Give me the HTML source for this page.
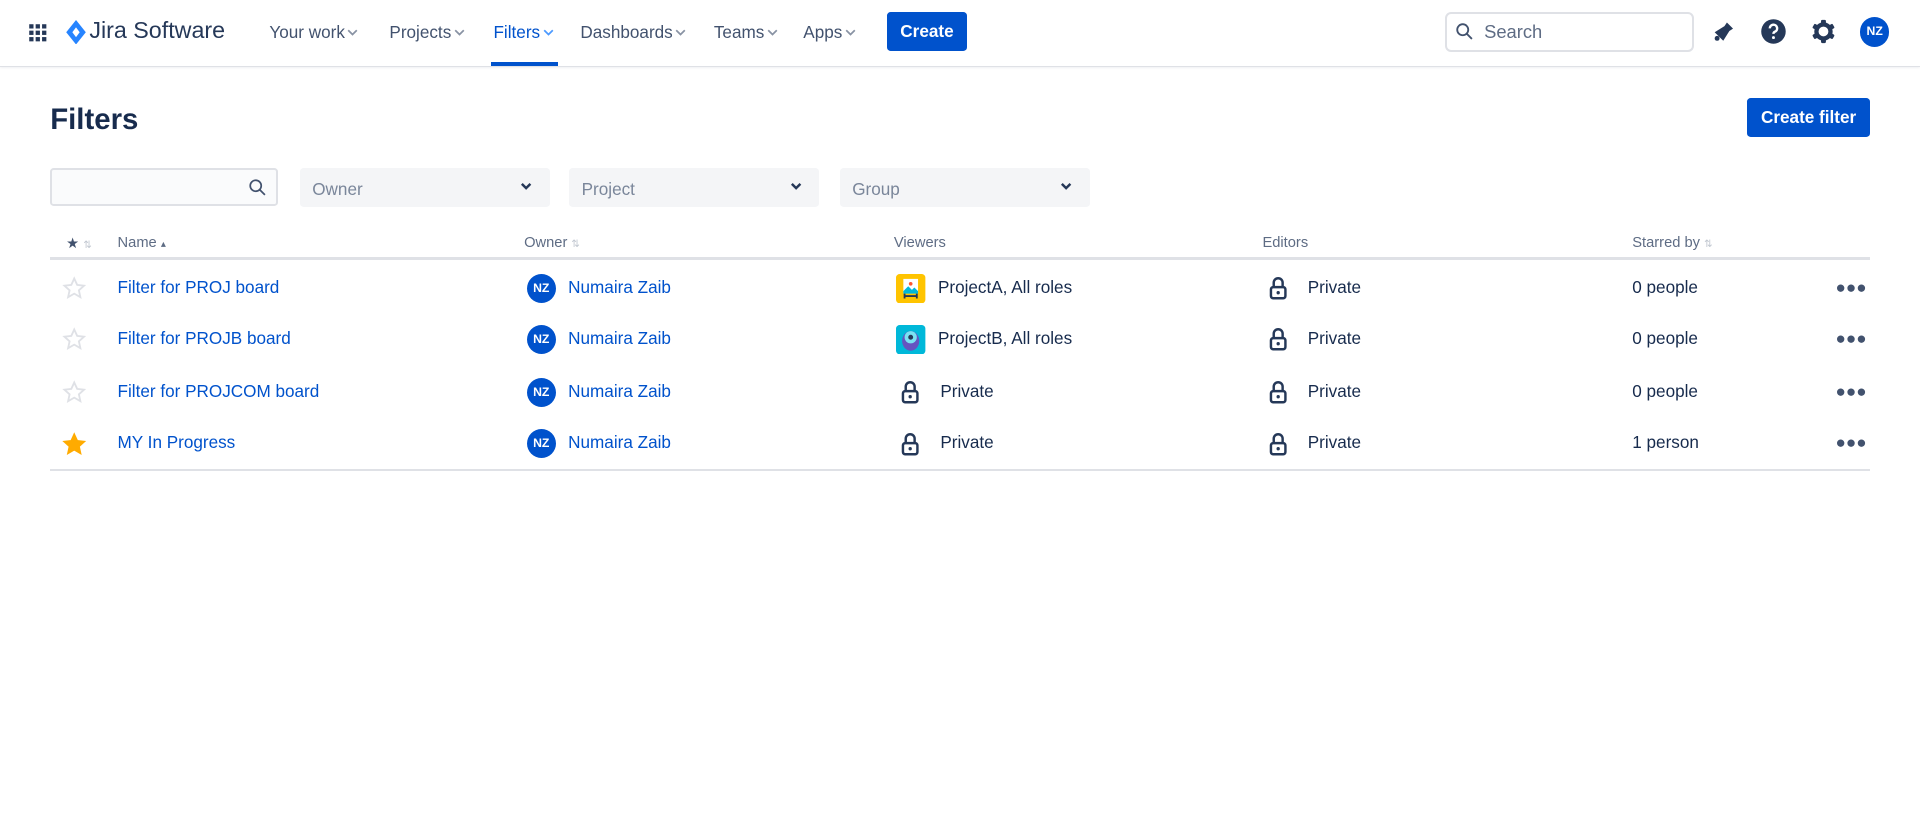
<!DOCTYPE html>
<html><head><meta charset="utf-8"><style>
html{zoom:1.2245}
body{margin:0;width:1568px;height:684px;overflow:hidden;background:#fff;font-family:"Liberation Sans",sans-serif;color:#172b4d;font-size:14px;position:relative}
.a{position:absolute}
.nav{left:0;top:0;width:1568px;height:54px;border-bottom:1px solid #dfe1e6;box-shadow:0 1px 2px rgba(9,30,66,.08)}
.ni{top:18px;font-size:14px;color:#42526e;white-space:nowrap}
.ni svg{margin-left:2px;vertical-align:1px}
.btn{background:#0052cc;color:#fff;font-weight:bold;border-radius:3px;text-align:center}
.sel{background:#f4f5f7;border-radius:3px;height:32px;top:137px;color:#7a869a;font-size:14px}
.sel span{position:absolute;left:10px;top:9px}
.sel svg{position:absolute;right:14px;top:12px}
.th{top:192px;font-size:12px;color:#5e6c84}
.row{left:41px;width:1486px;height:43px}
.cell{position:absolute;top:0;height:43px;line-height:43px;white-space:nowrap}
.av{display:inline-block;width:24px;height:24px;border-radius:50%;background:#0052cc;color:#fff;font-size:10px;line-height:24px;text-align:center;vertical-align:middle;margin-right:10px;font-weight:bold}
.lk{vertical-align:middle;margin-right:10px}
.dots{left:1458px;font-size:14px;letter-spacing:0px;color:#42526e}
a{color:#0052cc;text-decoration:none}
</style></head><body>
<div class="a nav"></div>
<svg class="a" style="left:23px;top:19px" width="16" height="16" viewBox="0 0 16 16" fill="#253858"><rect x="1" y="1" width="3.5" height="3.5"/><rect x="6.25" y="1" width="3.5" height="3.5"/><rect x="11.5" y="1" width="3.5" height="3.5"/><rect x="1" y="6.25" width="3.5" height="3.5"/><rect x="6.25" y="6.25" width="3.5" height="3.5"/><rect x="11.5" y="6.25" width="3.5" height="3.5"/><rect x="1" y="11.5" width="3.5" height="3.5"/><rect x="6.25" y="11.5" width="3.5" height="3.5"/><rect x="11.5" y="11.5" width="3.5" height="3.5"/></svg>
<svg class="a" style="left:53px;top:16px" width="18" height="20" viewBox="0 0 18 20"><path d="M9 0 L17 10 L9 20 L1 10Z" fill="#2684ff"/><path d="M9 6 L12 10 L9 14 L6 10Z" fill="#fff"/></svg>
<div class="a" style="left:73px;top:14px;font-size:19px;color:#253858">Jira Software</div>
<div class="a ni" style="left:220px">Your work<svg width="9" height="6" viewBox="0 0 9 6"><path d="M1 1l3.5 3.5L8 1" stroke="#8993a4" stroke-width="1.4" fill="none"/></svg></div>
<div class="a ni" style="left:318px">Projects<svg width="9" height="6" viewBox="0 0 9 6"><path d="M1 1l3.5 3.5L8 1" stroke="#8993a4" stroke-width="1.4" fill="none"/></svg></div>
<div class="a ni" style="left:403px;color:#0052cc">Filters<svg width="9" height="6" viewBox="0 0 9 6"><path d="M1 1l3.5 3.5L8 1" stroke="#4c9aff" stroke-width="1.4" fill="none"/></svg></div>
<div class="a" style="left:401px;top:51px;width:55px;height:3px;background:#0052cc"></div>
<div class="a ni" style="left:474px">Dashboards<svg width="9" height="6" viewBox="0 0 9 6"><path d="M1 1l3.5 3.5L8 1" stroke="#8993a4" stroke-width="1.4" fill="none"/></svg></div>
<div class="a ni" style="left:583px">Teams<svg width="9" height="6" viewBox="0 0 9 6"><path d="M1 1l3.5 3.5L8 1" stroke="#8993a4" stroke-width="1.4" fill="none"/></svg></div>
<div class="a ni" style="left:656px">Apps<svg width="9" height="6" viewBox="0 0 9 6"><path d="M1 1l3.5 3.5L8 1" stroke="#8993a4" stroke-width="1.4" fill="none"/></svg></div>
<div class="a btn" style="left:724px;top:10px;width:66px;height:32px;line-height:32px">Create</div>
<div class="a" style="left:1180px;top:10px;width:200px;height:29px;border:2px solid #dfe1e6;border-radius:5px"></div>
<svg class="a" style="left:1189px;top:19px" width="14" height="14" viewBox="0 0 14 14"><circle cx="5.5" cy="5.5" r="4.5" stroke="#42526e" stroke-width="1.5" fill="none"/><path d="M9 9l4 4" stroke="#42526e" stroke-width="1.5"/></svg>
<div class="a" style="left:1212px;top:17px;font-size:15px;color:#5e6c84">Search</div>
<svg class="a" style="left:1397px;top:16px" width="20" height="20" viewBox="0 0 20 20"><path d="M13 2 L18 7 L15 9 L10 17 L3 10 L11 5Z" fill="#253858"/><circle cx="5" cy="15" r="2" fill="#253858"/></svg>
<svg class="a" style="left:1437px;top:15px" width="22" height="22" viewBox="0 0 22 22"><circle cx="11" cy="11" r="10" fill="#253858"/><path d="M8 8.5a3 3 0 1 1 4 2.8c-.8.4-1 .9-1 1.7" stroke="#fff" stroke-width="2" fill="none"/><circle cx="11" cy="16" r="1.2" fill="#fff"/></svg>
<svg class="a" style="left:1478px;top:15px" width="22" height="22" viewBox="0 0 22 22"><g fill="#253858"><circle cx="11" cy="11" r="7.5"/><rect x="9" y="1.5" width="4" height="19" rx="1"/><rect x="9" y="1.5" width="4" height="19" rx="1" transform="rotate(60 11 11)"/><rect x="9" y="1.5" width="4" height="19" rx="1" transform="rotate(120 11 11)"/></g><circle cx="11" cy="11" r="4" fill="#fff"/></svg>
<div class="a av" style="left:1519px;top:14px;margin:0">NZ</div>
<div class="a" style="left:41px;top:84px;font-size:24px;font-weight:bold;color:#172b4d">Filters</div>
<div class="a btn" style="left:1427px;top:80px;width:100px;height:32px;line-height:32px">Create filter</div>
<div class="a" style="left:41px;top:137px;width:183px;height:28px;border:2px solid #dfe1e6;background:#fafbfc;border-radius:3px"></div>
<svg class="a" style="left:203px;top:146px" width="14" height="14" viewBox="0 0 14 14"><circle cx="5.5" cy="5.5" r="4.5" stroke="#42526e" stroke-width="1.4" fill="none"/><path d="M9 9l4 4" stroke="#42526e" stroke-width="1.4"/></svg>
<div class="a sel" style="left:245px;width:204px"><span>Owner</span><svg width="10" height="7" viewBox="0 0 10 7"><path d="M1.5 1.5l3.5 3.5 3.5-3.5" stroke="#253858" stroke-width="2" fill="none"/></svg></div>
<div class="a sel" style="left:465px;width:204px"><span>Project</span><svg width="10" height="7" viewBox="0 0 10 7"><path d="M1.5 1.5l3.5 3.5 3.5-3.5" stroke="#253858" stroke-width="2" fill="none"/></svg></div>
<div class="a sel" style="left:686px;width:204px"><span>Group</span><svg width="10" height="7" viewBox="0 0 10 7"><path d="M1.5 1.5l3.5 3.5 3.5-3.5" stroke="#253858" stroke-width="2" fill="none"/></svg></div>
<div class="a th" style="left:54px;color:#42526e">★ <span style="color:#c1c7d0;font-size:8px">⇅</span></div>
<div class="a th" style="left:96px">Name <span style="font-size:8px">▴</span></div>
<div class="a th" style="left:428px">Owner <span style="color:#c1c7d0;font-size:8px">⇅</span></div>
<div class="a th" style="left:730px">Viewers</div>
<div class="a th" style="left:1031px">Editors</div>
<div class="a th" style="left:1333px">Starred by <span style="color:#c1c7d0;font-size:8px">⇅</span></div>
<div class="a" style="left:41px;top:210px;width:1486px;height:2px;background:#dfe1e6"></div>
<div class="a" style="left:41px;top:383px;width:1486px;height:2px;background:#dfe1e6"></div>

<div class="a row" style="top:213px">
<div class="cell" style="left:10px"><svg width="20" height="20" viewBox="0 0 20 20" style="vertical-align:middle"><path d="M10 2l2.4 5.3 5.6.6-4.2 3.8 1.2 5.6L10 14.4 5 17.3l1.2-5.6L2 7.9l5.6-.6z" fill="none" stroke="#dfe1e6" stroke-width="1.5"/></svg></div>
<div class="cell" style="left:55px"><a>Filter for PROJ board</a></div>
<div class="cell" style="left:389px"><span class="av">NZ</span><a>Numaira Zaib</a></div>
<div class="cell" style="left:691px"><svg class="lk" width="24" height="24" viewBox="0 0 24 24"><rect width="24" height="24" rx="3" fill="#ffc400"/><rect x="6" y="4" width="12" height="12" fill="#fff"/><path d="M6 14l4-4 3 3 2-2 3 3v2H6z" fill="#00b8d9"/><circle cx="12" cy="8" r="1.5" fill="#ff5630"/><path d="M7 16v4M17 16v4M7 18h10" stroke="#253858" stroke-width="1.5"/></svg>ProjectA, All roles</div>
<div class="cell" style="left:995px"><svg class="lk" width="15" height="20" viewBox="0 0 16 22"><path d="M4 10V6a4 4 0 0 1 8 0v4" stroke="#253858" stroke-width="2.2" fill="none"/><rect x="1.5" y="10" width="13" height="10" rx="2" fill="none" stroke="#253858" stroke-width="2.2"/><circle cx="8" cy="15" r="1.5" fill="#253858"/></svg><span style="margin-left:7px">Private</span></div>
<div class="cell" style="left:1292px">0 people</div>
<div class="cell dots">●●●</div>
</div>
<div class="a row" style="top:255px">
<div class="cell" style="left:10px"><svg width="20" height="20" viewBox="0 0 20 20" style="vertical-align:middle"><path d="M10 2l2.4 5.3 5.6.6-4.2 3.8 1.2 5.6L10 14.4 5 17.3l1.2-5.6L2 7.9l5.6-.6z" fill="none" stroke="#dfe1e6" stroke-width="1.5"/></svg></div>
<div class="cell" style="left:55px"><a>Filter for PROJB board</a></div>
<div class="cell" style="left:389px"><span class="av">NZ</span><a>Numaira Zaib</a></div>
<div class="cell" style="left:691px"><svg class="lk" width="24" height="24" viewBox="0 0 24 24"><rect width="24" height="24" rx="3" fill="#00b8d9"/><ellipse cx="12" cy="13" rx="7" ry="8" fill="#6554c0"/><circle cx="12" cy="10" r="5" fill="#79e2f2"/><circle cx="12" cy="10" r="2" fill="#253858"/></svg>ProjectB, All roles</div>
<div class="cell" style="left:995px"><svg class="lk" width="15" height="20" viewBox="0 0 16 22"><path d="M4 10V6a4 4 0 0 1 8 0v4" stroke="#253858" stroke-width="2.2" fill="none"/><rect x="1.5" y="10" width="13" height="10" rx="2" fill="none" stroke="#253858" stroke-width="2.2"/><circle cx="8" cy="15" r="1.5" fill="#253858"/></svg><span style="margin-left:7px">Private</span></div>
<div class="cell" style="left:1292px">0 people</div>
<div class="cell dots">●●●</div>
</div>
<div class="a row" style="top:298px">
<div class="cell" style="left:10px"><svg width="20" height="20" viewBox="0 0 20 20" style="vertical-align:middle"><path d="M10 2l2.4 5.3 5.6.6-4.2 3.8 1.2 5.6L10 14.4 5 17.3l1.2-5.6L2 7.9l5.6-.6z" fill="none" stroke="#dfe1e6" stroke-width="1.5"/></svg></div>
<div class="cell" style="left:55px"><a>Filter for PROJCOM board</a></div>
<div class="cell" style="left:389px"><span class="av">NZ</span><a>Numaira Zaib</a></div>
<div class="cell" style="left:695px"><svg class="lk" width="15" height="20" viewBox="0 0 16 22"><path d="M4 10V6a4 4 0 0 1 8 0v4" stroke="#253858" stroke-width="2.2" fill="none"/><rect x="1.5" y="10" width="13" height="10" rx="2" fill="none" stroke="#253858" stroke-width="2.2"/><circle cx="8" cy="15" r="1.5" fill="#253858"/></svg><span style="margin-left:7px">Private</span></div>
<div class="cell" style="left:995px"><svg class="lk" width="15" height="20" viewBox="0 0 16 22"><path d="M4 10V6a4 4 0 0 1 8 0v4" stroke="#253858" stroke-width="2.2" fill="none"/><rect x="1.5" y="10" width="13" height="10" rx="2" fill="none" stroke="#253858" stroke-width="2.2"/><circle cx="8" cy="15" r="1.5" fill="#253858"/></svg><span style="margin-left:7px">Private</span></div>
<div class="cell" style="left:1292px">0 people</div>
<div class="cell dots">●●●</div>
</div>
<div class="a row" style="top:340px">
<div class="cell" style="left:10px"><svg width="20" height="20" viewBox="0 0 20 20" style="vertical-align:middle"><path d="M10 2l2.4 5.3 5.6.6-4.2 3.8 1.2 5.6L10 14.4 5 17.3l1.2-5.6L2 7.9l5.6-.6z" fill="#ffab00" stroke="#ffab00" stroke-width="1.5"/></svg></div>
<div class="cell" style="left:55px"><a>MY In Progress</a></div>
<div class="cell" style="left:389px"><span class="av">NZ</span><a>Numaira Zaib</a></div>
<div class="cell" style="left:695px"><svg class="lk" width="15" height="20" viewBox="0 0 16 22"><path d="M4 10V6a4 4 0 0 1 8 0v4" stroke="#253858" stroke-width="2.2" fill="none"/><rect x="1.5" y="10" width="13" height="10" rx="2" fill="none" stroke="#253858" stroke-width="2.2"/><circle cx="8" cy="15" r="1.5" fill="#253858"/></svg><span style="margin-left:7px">Private</span></div>
<div class="cell" style="left:995px"><svg class="lk" width="15" height="20" viewBox="0 0 16 22"><path d="M4 10V6a4 4 0 0 1 8 0v4" stroke="#253858" stroke-width="2.2" fill="none"/><rect x="1.5" y="10" width="13" height="10" rx="2" fill="none" stroke="#253858" stroke-width="2.2"/><circle cx="8" cy="15" r="1.5" fill="#253858"/></svg><span style="margin-left:7px">Private</span></div>
<div class="cell" style="left:1292px">1 person</div>
<div class="cell dots">●●●</div>
</div>
</body></html>
